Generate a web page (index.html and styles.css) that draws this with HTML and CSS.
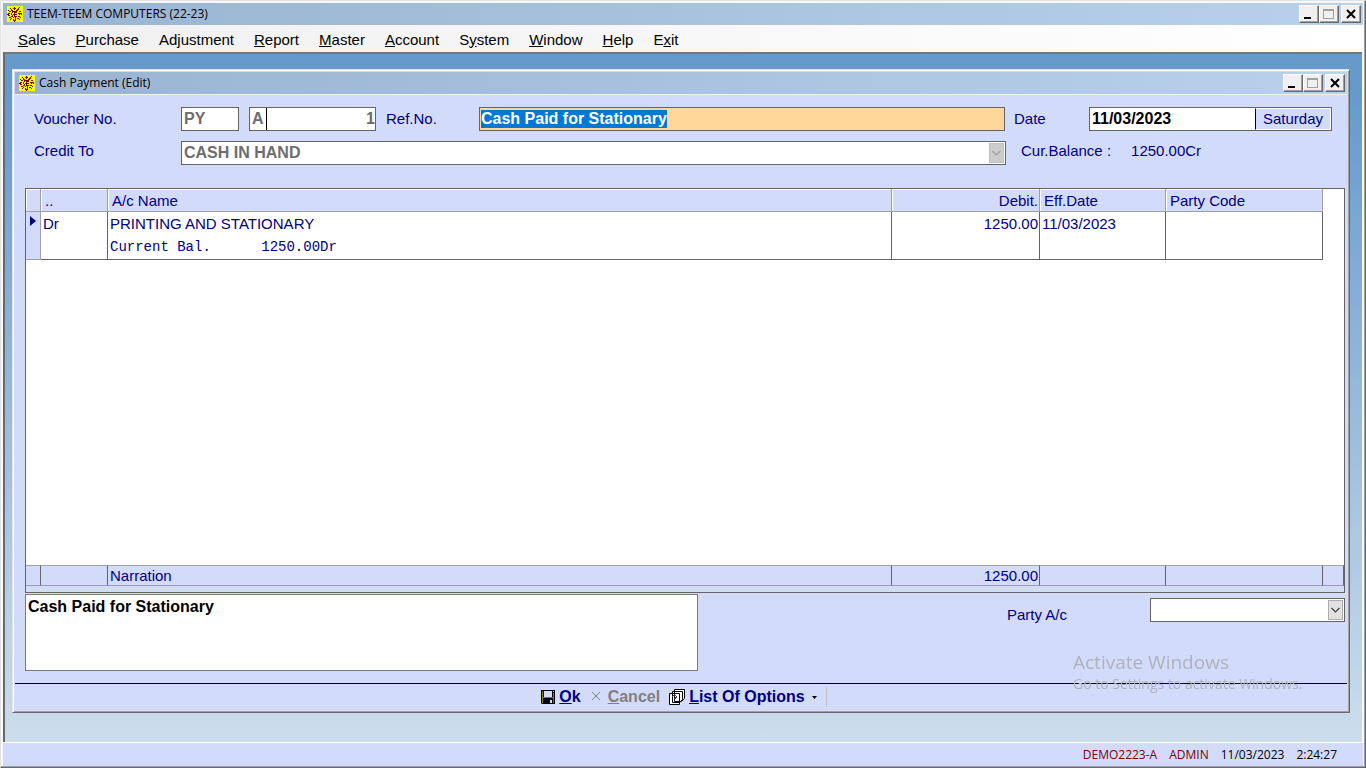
FILE: index.html
```html
<!DOCTYPE html>
<html lang="en">
<head>
<meta charset="utf-8">
<title>TEEM-TEEM COMPUTERS (22-23)</title>
<link rel="stylesheet" href="styles.css">
</head>
<body>
<svg class="defs" aria-hidden="true">
  <symbol id="logo" viewBox="0 0 16 16">
    <rect width="16" height="16" fill="#ff0"/>
    <path fill="#800000" d="M7 1h1v1H7zM12 1h1v1h-1zM3 2h1v1H3zM6 2h3v1H6zM11 2h1v1h-1zM4 3h1v1H4zM7 3h1v1H7zM10 3h2v1h-2zM1 4h1v1H1zM4 4h2v1H4zM9 4h2v1H9zM2 5h2v1H2zM5 5h5v1H5zM12 5h2v1h-2zM5 6h1v1H5zM7 6h3v1H7zM1 7h2v1H1zM4 7h1v1H4zM7 7h1v1H7zM11 7h4v1h-4zM0 8h2v1H0zM4 8h1v1H4zM6 8h4v1H6zM12 8h1v1h-1zM14 8h1v1h-1zM1 9h2v1H1zM5 9h1v1H5zM7 9h1v1H7zM4 10h2v1H4zM7 10h3v1H7zM11 10h2v1h-2zM2 11h2v1H2zM6 11h1v1H6zM8 11h1v1H8zM13 11h1v1h-1zM4 12h1v1H4zM8 12h1v1H8zM10 12h2v1h-2zM3 13h1v1H3zM6 13h1v1H6zM8 13h1v1H8zM12 13h1v1h-1zM6 14h3v1H6zM7 15h1v1H7z"/>
  </symbol>
  <symbol id="min" viewBox="0 0 16 16"><path d="M4 11h7v2H4z" fill="#000"/></symbol>
  <symbol id="max" viewBox="0 0 16 16"><path d="M3 3h11v10H3zM4 5v7h9V5z" fill="#a0a0a0" fill-rule="evenodd"/></symbol>
  <symbol id="close" viewBox="0 0 16 16"><path d="M5 4l8 8M13 4l-8 8" stroke="#000" stroke-width="2"/></symbol>
  <symbol id="chev" viewBox="0 0 13 18"><path d="M2.500 7l4 4 4-4" stroke="currentColor" stroke-width="1.200" fill="none"/></symbol>
</svg>
<div class="window app">
  <header class="titlebar">
    <svg class="logo"><use href="#logo"/></svg>
    <h1 class="caption">TEEM-TEEM COMPUTERS (22-23)</h1>
    <button class="winbtn" aria-label="Minimize"><svg><use href="#min"/></svg></button>
    <button class="winbtn" aria-label="Maximize" disabled><svg><use href="#max"/></svg></button>
    <button class="winbtn winbtn-close" aria-label="Close"><svg><use href="#close"/></svg></button>
  </header>
  <nav class="menu">
    <button><u>S</u>ales</button><button><u>P</u>urchase</button><button>Ad<u>j</u>ustment</button><button><u>R</u>eport</button><button><u>M</u>aster</button><button><u>A</u>ccount</button><button>S<u>y</u>stem</button><button><u>W</u>indow</button><button><u>H</u>elp</button><button>E<u>x</u>it</button>
  </nav>
  <main class="workspace">
    <section class="window child">
      <header class="titlebar">
        <svg class="logo"><use href="#logo"/></svg>
        <h2 class="caption">Cash Payment (Edit)</h2>
        <button class="winbtn" aria-label="Minimize"><svg><use href="#min"/></svg></button>
        <button class="winbtn" aria-label="Maximize" disabled><svg><use href="#max"/></svg></button>
        <button class="winbtn winbtn-close" aria-label="Close"><svg><use href="#close"/></svg></button>
      </header>
      <form class="voucher">
        <div class="fields">
          <label for="vtype">Voucher No.</label>
          <div class="number">
            <input id="vtype" class="field vtype" value="PY" disabled>
            <div class="field series">
              <input class="series-code" aria-label="Series" value="A" disabled>
              <input class="series-no" aria-label="Number" value="1" disabled>
            </div>
            <label for="ref">Ref.No.</label>
          </div>
          <div class="field ref"><input id="ref" class="ref-input" value="Cash Paid for Stationary"></div>
          <div class="side">
            <label for="date" class="date-label">Date</label>
            <div class="field date">
              <input id="date" value="11/03/2023">
              <output class="weekday">Saturday</output>
            </div>
          </div>
          <label for="credit" class="credit-label">Credit To</label>
          <div class="combo combo-off credit">
            <select id="credit" disabled><option>CASH IN HAND</option></select>
            <svg><use href="#chev"/></svg>
          </div>
          <div class="side balance"><span>Cur.Balance :</span><span>1250.00Cr</span></div>
        </div>
        <div class="ledger">
          <table class="lines">
            <colgroup><col class="c-mark"><col class="c-type"><col><col class="c-debit"><col class="c-date"><col class="c-party"></colgroup>
            <thead><tr><th></th><th>..</th><th>A/c Name</th><th class="num">Debit.</th><th>Eff.Date</th><th>Party Code</th></tr></thead>
            <tbody><tr>
              <td class="mark"><svg viewBox="0 0 6 10"><path d="M0 0l6 5-6 5z" fill="#000080"/></svg></td>
              <td>Dr</td>
              <td>PRINTING AND STATIONARY<pre class="bal">Current Bal.      1250.00Dr</pre></td>
              <td class="num">1250.00</td><td>11/03/2023</td><td></td>
            </tr></tbody>
          </table>
          <table class="totals">
            <colgroup><col class="c-mark"><col class="c-type"><col><col class="c-debit"><col class="c-date"><col class="c-party"><col class="c-end"></colgroup>
            <tbody><tr><td></td><td></td><td>Narration</td><td class="num">1250.00</td><td></td><td></td><td></td></tr></tbody>
          </table>
        </div>
        <div class="bottom">
          <textarea class="narration" aria-label="Narration">Cash Paid for Stationary</textarea>
          <div class="party">
            <label for="party">Party A/c</label>
            <div class="combo"><select id="party"><option></option></select><svg><use href="#chev"/></svg></div>
          </div>
        </div>
        <div class="actions">
          <button type="button"><svg viewBox="0 0 14 14"><path d="M0 0h14v14H1L0 13z" fill="#000"/><path d="M1 1h1v12H1zM12 3h1v10h-1zM2 7h10v1H2z" fill="#808000"/><path d="M3 1h8v6H3zM9 10h2v3H9zM12 1h1v1h-1z" fill="#d3dbfa"/></svg><span><u>O</u>k</span></button>
          <button type="button" disabled><svg class="x" viewBox="0 0 14 14"><path d="M2 2l8 8M10 2l-8 8" stroke="#848484" fill="none"/></svg><span><u>C</u>ancel</span></button>
          <button type="button"><svg class="cards" viewBox="0 0 16 16"><g fill="#fff" stroke="#000"><path d="M5.500 .5h10v9l-3 3h-7zM3.500 2.500h10v8l-3 3h-7zM.5 4.500h10v11H.5z"/></g><path d="M3 7h1V6h3v1h1v2H7v1H6v1H5v-2h1V8h1V7H4v1H3zM5 12h1v1H5z" fill="#404040"/></svg><span><u>L</u>ist Of Options</span><svg class="drop" viewBox="0 0 5 3"><path d="M0 0h5L2.500 3z" fill="#000"/></svg></button>
          <i class="divider"></i>
        </div>
      </form>
    </section>
  </main>
  <footer class="status"><span class="who">DEMO2223-A</span><span class="who">ADMIN</span><span>11/03/2023</span><span>2:24:27</span></footer>
</div>
<aside class="watermark"><p class="wm-title">Activate Windows</p><p class="wm-text">Go to Settings to activate Windows.</p></aside>
<script src="app.js"></script>
</body>
</html>
```
FILE: styles.css
```css
* { box-sizing: border-box; }
body, h1, h2, p, pre { margin: 0; }
body { font: 15px/18px "Liberation Sans", Arial, sans-serif; color: #000080; }
button, input, select, textarea { font: inherit; color: inherit; margin: 0; padding: 0; border: 0; border-radius: 0; background: none; outline: 0; }
.defs { position: absolute; width: 0; height: 0; }

.window { display: flex; flex-direction: column; }
.app { height: 100vh; padding: 1px 2px 1px 1px; border: 1px solid #e3e3e3; border-right-color: #696969; border-bottom-color: #696969; background: #f8f8f8; box-shadow: inset -1px -1px #a0a0a0; }
.titlebar { display: flex; align-items: center; height: 22px; padding: 0 2px 0 4px; background: linear-gradient(90deg, #99b4d1, #b9d1ea); flex: none; }
.app > .titlebar { margin: 1px 0 0 1px; }
.logo { width: 16px; height: 16px; margin-right: 4px; }
.caption { flex: 1; font: 12px/20px "Open Sans", "Noto Sans", sans-serif; color: #000; }
.winbtn { width: 20px; height: 18px; background: #f0f0f0; border: 1px solid #fff; border-right-color: #696969; border-bottom-color: #696969; box-shadow: inset -1px -1px #a0a0a0; }
.winbtn svg { display: block; width: 16px; height: 16px; }
.winbtn-close { margin-left: 2px; }

.menu { display: flex; gap: 20px; align-items: center; height: 27px; padding: 2px 16px 0; background: linear-gradient(90deg, #f0f0f0, #fff); color: #000; flex: none; }
.workspace { flex: 1; display: flex; margin: 0 1px 0 1px; padding: 15px 12px 29px 7px; border: solid #696969; border-width: 2px 0 0 2px; border-top-color: #767676; background: linear-gradient(#69c, #69c 5%, #cddded); }

.child { flex: 1; padding: 2px; background: #d3dbfa; border: 1px solid #e3e3e3; border-right: 1px solid #696969; border-bottom: 1px solid #696969; box-shadow: inset 1px 1px #fff, inset -1px -1px #a0a0a0; }
.child > .titlebar { box-shadow: 0 1px #f0f0f0; }
.voucher { flex: 1; display: flex; flex-direction: column; padding-top: 13px; }
.fields { display: grid; grid-template-columns: 147px 288px minmax(200px, 1fr) 327px; grid-template-rows: 24px 24px; row-gap: 10px; align-items: center; padding: 0 15px 0 19px; }
.field, .combo { border: 1px solid #646464; background: #fff; font-size: 16px; font-weight: bold; color: #6d6d6d; }
.field input { height: 100%; padding: 0 2px; min-width: 0; }
.number { display: flex; align-items: center; gap: 10px; height: 24px; margin-right: -10px; }
.number .vtype { width: 58px; height: 24px; padding: 0 2px; }
.series { display: flex; width: 127px; height: 24px; }
.series-code { width: 17px; border-right: 1px solid #000 !important; }
.field .series-no { flex: 1; padding: 0; text-align: right; }
.ref { height: 24px; margin-left: 10px; background: #ffd798; color: #000; }
.field .ref-input { width: 100%; padding: 0 1px; }
.ref-input::selection { background: #0078d7; color: #fff; }
.side { display: flex; align-items: center; padding-left: 9px; }
.date-label { flex: 1; }
.date { display: flex; width: 243px; height: 24px; color: #000; }
.date input { flex: 1; }
.weekday { width: 76px; border: 1px solid #fff; border-left: 1px solid #000; background: #d3dbfa; color: #000080; font-size: 15px; font-weight: normal; line-height: 20px; text-align: center; }
.combo { position: relative; height: 24px; }
.combo select { appearance: none; width: 100%; height: 100%; padding-left: 2px; opacity: 1; }
.combo svg { position: absolute; right: 1px; top: 1px; width: 15px; height: 20px; background: #e1e1e1; border: 1px solid #adadad; color: #404040; pointer-events: none; }
.combo-off svg { background: #ccc; border-color: #bfbfbf; color: #a0a0a0; }
.credit { grid-column: 2 / 4; margin-right: -1px; }
.credit-label, .balance { padding-bottom: 4px; }
.balance { gap: 20px; padding-left: 16px; }

.ledger { flex: 1; display: flex; flex-direction: column; justify-content: space-between; margin: 23px 2px 0 10px; border: 1px solid #646464; background: #fff; }
table { border-collapse: separate; border-spacing: 0; table-layout: fixed; width: 100%; }
.lines { width: calc(100% - 21px); }
.c-mark { width: 15px; } .c-type { width: 67px; } .c-debit { width: 148px; } .c-date { width: 126px; } .c-party { width: 157px; } .c-end { width: 21px; }
th { height: 23px; padding: 1px 4px 0; background: #d3dbfa; border-right: 1px solid #a0a0a0; border-bottom: 1px solid #a0a0a0; box-shadow: inset 1px 1px #fff; font-weight: normal; text-align: left; }
td { padding: 3px 2px 0; border-right: 1px solid #646464; vertical-align: top; }
.lines td { height: 48px; border-bottom: 1px solid #646464; }
.lines .mark { background: #d3dbfa; padding: 4px 3px 0 4px; border-color: #a0a0a0; }
.mark svg { display: block; width: 6px; height: 10px; }
.num { text-align: right; padding-right: 1px; }
.bal { margin-top: 5px; font: 14px/18px "Liberation Mono", "Courier New", monospace; }
.totals { background: #d3dbfa; padding-bottom: 6px; }
.totals td { height: 20px; padding-top: 1px; border-top: 1px solid #a0a0a0; border-bottom: 1px solid #a0a0a0; }

.bottom { display: flex; justify-content: space-between; margin: 1px 2px 12px 10px; }
.narration { width: 51%; height: 77px; padding: 3px 2px; border: 1px solid #7a7a7a; background: #fff; color: #000; font-size: 16px; font-weight: bold; line-height: 18px; resize: none; }
.party { display: flex; align-items: flex-start; gap: 83px; padding-top: 4px; }
.party label { padding-top: 8px; }
.party .combo { width: 195px; height: 24px; }
.actions { display: flex; justify-content: center; align-items: center; height: 27px; padding-left: 6px; border-top: 1px solid #000; font-size: 16px; font-weight: bold; gap: 9px; }
.actions button { display: flex; align-items: center; gap: 4px; }
.actions button:disabled { color: #808080; }
.actions svg { width: 14px; height: 14px; }
.actions .cards { width: 16px; height: 16px; }
.actions .drop { width: 5px; height: 3px; margin-left: 3px; }
.divider { width: 1px; height: 20px; background: #c0c0c0; }

.status { display: flex; justify-content: flex-end; gap: 12px; height: 24px; padding: 0 26px; margin-left: 1px; background: #d3dbfa; border-top: 1px solid #fff; color: #000; font: 12px/23px "Open Sans", "Noto Sans", sans-serif; flex: none; }
.who { color: #800000; }
.watermark { position: fixed; right: 56px; bottom: 74px; width: 237px; color: #aeb2bd; font-family: "Open Sans", "Noto Sans", sans-serif; pointer-events: none; white-space: nowrap; }
.wm-title { font-size: 19px; line-height: 24px; }
.wm-text { font-size: 14px; line-height: 20px; }
```
FILE: app.js
```js
const ref = document.getElementById("ref");
ref.focus();
ref.select();
```
